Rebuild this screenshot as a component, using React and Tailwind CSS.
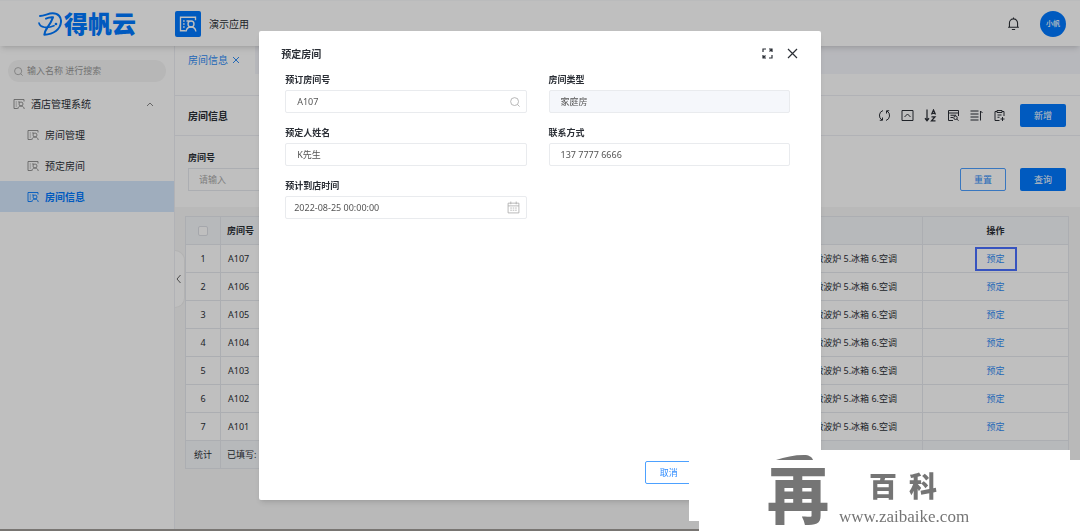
import { useState } from "react";

const MENU = ["房间管理", "预定房间", "房间信息"];
const ROOMS = ["A107", "A106", "A105", "A104", "A103", "A102", "A101"];

const RecordIcon = ({ className }) => (
  <svg
    className={className}
    viewBox="0 0 24 24"
    fill="none"
    stroke="currentColor"
    strokeWidth="1.8"
    aria-hidden="true"
  >
    <path d="M9 21H2V3h20v4" />
    <path d="M5.500 8h2M10 8h4M5.500 12h2M5.500 16h2" />
    <circle cx="16" cy="12" r="4" />
    <path d="M9.500 22c.4-3.500 2.600-6 6.500-6s6 2.500 6.500 6" />
  </svg>
);

const LogoMark = () => (
  <svg
    className="w-6 h-6"
    viewBox="0 0 72 72"
    fill="none"
    stroke="currentColor"
    strokeLinecap="round"
    strokeLinejoin="round"
    aria-hidden="true"
  >
    <path
      strokeWidth="6"
      d="M6 12C20 12 30 4 44 4c17 0 26 11 25 26-2 22-22 37-50 38 1-8 3-12 7-18"
    />
    <path strokeWidth="6" d="M24 20c8-4 14-5 21-4C40 30 32 42 26 50" />
    <path strokeWidth="5" d="M3 33c3 15 26 16 45 8" />
    <circle cx="54" cy="36" r="4" fill="currentColor" stroke="none" />
  </svg>
);

const SearchIcon = ({ className }) => (
  <svg
    className={className}
    viewBox="0 0 24 24"
    fill="none"
    stroke="currentColor"
    strokeWidth="2"
    aria-hidden="true"
  >
    <circle cx="11" cy="11" r="9.500" />
    <path d="m18 18 5 5" />
  </svg>
);

const BellIcon = () => (
  <svg
    className="w-[13px] h-[13px]"
    viewBox="0 0 24 24"
    fill="none"
    stroke="currentColor"
    strokeWidth="2"
    aria-hidden="true"
  >
    <path d="M2 19h20M4.500 19v-8a7.500 7.500 0 0 1 15 0v8M12 3.500V1M9 23h6" />
  </svg>
);

const CalendarIcon = () => (
  <svg
    className="w-[13px] h-[13px]"
    viewBox="0 0 24 24"
    fill="none"
    stroke="currentColor"
    strokeWidth="1.500"
    aria-hidden="true"
  >
    <path d="M2 4h20v18H2zM2 9h20M7 1v5M17 1v5" />
    <path d="M6 13h3M10.500 13h3M15 13h3M6 17h3M10.500 17h3M15 17h3" />
  </svg>
);

const TOOLS = [
  {
    label: "刷新",
    icon: (
      <>
        <path d="M9 2a10.500 10.500 0 0 0-2 19M15 22a10.500 10.500 0 0 0 2-19" />
        <path d="M2.500 21.500H8V16M21.500 2.500H16V8" />
      </>
    ),
  },
  {
    label: "收起",
    icon: (
      <>
        <path d="M1 2h22v20H1z" />
        <path d="m6 15 6-6 6 6" />
      </>
    ),
  },
  {
    label: "排序",
    icon: (
      <>
        <path strokeWidth="2.500" d="M5 0v22M1 17.500l4 5 4-5" />
        <path
          strokeWidth="2.500"
          d="m14 10 4-9 4 9M15 7.500h6M14 14.500h7l-7 8h8"
        />
      </>
    ),
  },
  {
    label: "筛选",
    icon: (
      <>
        <path d="M11 22H2V2h20v11" />
        <path d="M2 7h20M6 11.500h11M6 16h5" />
        <circle cx="16" cy="16.500" r="3.500" />
        <path d="m18.500 19 3.500 3.500" />
      </>
    ),
  },
  {
    label: "行高",
    icon: <path d="M0 3h16M0 9h16M0 15h16M0 21h16M20 22V3l4 4" />,
  },
  {
    label: "导入",
    icon: (
      <>
        <path d="M12 22H3V4h4M17 4h4v9M7 2h10v4H7z" />
        <path d="M8 11h8M8 15.500h4M18 15v8M14 19h8" />
      </>
    ),
  },
];

const Header = () => (
  <header className="relative z-10 flex items-center h-[46px] shrink-0 pr-3.5 bg-white border-t border-gray-50 shadow-md">
    <div className="w-[175px] pl-[38px] flex items-center gap-0.5 text-[#0079ff] shrink-0">
      <LogoMark />
      <span className="text-[24px] leading-6 font-black whitespace-nowrap">
        得帆云
      </span>
    </div>
    <div className="flex items-center gap-2">
      <div className="w-[26px] h-[26px] rounded-xs bg-[#0079ff] text-white flex items-center justify-center">
        <RecordIcon className="w-[18px] h-[18px]" />
      </div>
      <span className="text-[10px]">演示应用</span>
    </div>
    <div className="ml-auto flex items-center gap-5">
      <button type="button" aria-label="通知">
        <BellIcon />
      </button>
      <div className="w-[26px] h-[26px] rounded-full bg-[#0079ff] text-white text-[7px] font-medium flex items-center justify-center">
        小帆
      </div>
    </div>
  </header>
);

const Sidebar = ({ active, onSelect }) => (
  <aside className="w-[174px] shrink-0 bg-white pt-3.5">
    <label className="mx-2 h-[22px] px-1.5 rounded-full bg-[#f5f5f5] flex items-center gap-1 text-[#999]">
      <SearchIcon className="w-[9px] h-[9px] shrink-0" />
      <input
        type="text"
        aria-label="搜索"
        placeholder="输入名称 进行搜索"
        className="w-full bg-transparent outline-none placeholder:text-[#999]"
      />
    </label>
    <nav className="mt-1.5 text-[10px]">
      <button
        type="button"
        className="w-full h-[31px] pl-[13px] pr-5 flex items-center gap-1.5"
      >
        <RecordIcon className="w-3 h-3 text-[#888]" />
        酒店管理系统
        <svg
          className="ml-auto w-2 h-2 text-[#888]"
          viewBox="0 0 8 8"
          fill="none"
          stroke="currentColor"
          aria-hidden="true"
        >
          <path d="m1 6 3-3 3 3" />
        </svg>
      </button>
      {MENU.map((item) => (
        <a
          key={item}
          href="#"
          onClick={() => onSelect(item)}
          className={`h-[31px] pl-[27px] flex items-center gap-1.5 ${
            item === active ? "bg-[#d5e7fc] text-[#0079ff] font-bold" : ""
          }`}
        >
          <RecordIcon
            className={`w-3 h-3 ${item === active ? "" : "text-[#888]"}`}
          />
          {item}
        </a>
      ))}
    </nav>
  </aside>
);

const RoomTable = () => (
  <table className="w-full table-fixed border-collapse bg-white text-center">
    <thead>
      <tr className="h-7 bg-[#f5f7fa]">
        <th scope="col" className="w-[35px] border border-[#e6e9ee]">
          <input
            type="checkbox"
            aria-label="全选"
            className="block mx-auto w-2.5 h-2.5 appearance-none border border-[#dcdfe6] rounded-xs bg-white"
          />
        </th>
        <th
          scope="col"
          className="w-[90px] pl-1.5 border border-[#e6e9ee] text-left"
        >
          房间号
        </th>
        <td className="border border-[#e6e9ee]"></td>
        <th scope="col" className="w-[146px] border border-[#e6e9ee]">
          操作
        </th>
      </tr>
    </thead>
    <tbody>
      {ROOMS.map((room, index) => (
        <tr key={room} className="h-7">
          <td className="border border-[#e6e9ee]">{index + 1}</td>
          <td className="pl-[7px] border border-[#e6e9ee] text-left">{room}</td>
          <td className="pr-[25px] border border-[#e6e9ee] text-right">
            微波炉 5.冰箱 6.空调
          </td>
          <td className="border border-[#e6e9ee]">
            <button
              type="button"
              className={`block mx-auto w-[42px] h-6 text-[#2f8cf5] ${
                index === 0 ? "border-2 border-[#4a6fff]" : ""
              }`}
            >
              预定
            </button>
          </td>
        </tr>
      ))}
    </tbody>
    <tfoot>
      <tr className="h-7 bg-[#f5f7fa]">
        <td className="border border-[#e6e9ee]">统计</td>
        <td className="pl-1.5 border border-[#e6e9ee] text-left">已填写:</td>
        <td className="border border-[#e6e9ee]"></td>
        <td className="border border-[#e6e9ee]"></td>
      </tr>
    </tfoot>
  </table>
);

const RoomPage = () => (
  <main className="relative flex-1 min-w-0 border-l border-[#eceef3] bg-[#f7f7f7]">
    <div className="flex h-7 bg-[#f5f6fb]">
      <div className="w-20 pl-[13px] bg-white flex items-center gap-1 text-[#2f8cf5] text-[10px]">
        房间信息
        <button type="button" aria-label="关闭标签">
          <svg
            className="w-2 h-2"
            viewBox="0 0 8 8"
            stroke="currentColor"
            aria-hidden="true"
          >
            <path d="m1 1 6 6M7 1 1 7" />
          </svg>
        </button>
      </div>
    </div>
    <div className="h-[22px] bg-white border-b border-[#eceef3]" />
    <div className="h-10 pl-[13px] pr-3.5 bg-white border-b border-[#eceef3] flex items-center">
      <h1 className="text-[10px] font-bold">房间信息</h1>
      <div className="ml-auto mr-3.5 flex items-center gap-2.5">
        {TOOLS.map(({ label, icon }) => (
          <button key={label} type="button" aria-label={label}>
            <svg
              className="w-[13px] h-[13px]"
              viewBox="-1 -1 26 26"
              fill="none"
              stroke="currentColor"
              strokeWidth="2"
              aria-hidden="true"
            >
              {icon}
            </svg>
          </button>
        ))}
      </div>
      <button
        type="button"
        className="w-[46px] h-[23px] rounded-xs bg-[#0079ff] text-white"
      >
        新增
      </button>
    </div>
    <div className="h-[71px] pl-[13px] pr-3.5 pb-4 bg-white flex items-end justify-between">
      <div className="w-60">
        <label htmlFor="room-filter" className="block h-5 leading-5 font-bold">
          房间号
        </label>
        <input
          id="room-filter"
          type="text"
          placeholder="请输入"
          className="block w-full h-[23px] px-2.5 border border-[#e6e9ee] outline-none placeholder:text-[#aaa]"
        />
      </div>
      <div className="flex gap-3.5">
        <button
          type="button"
          className="w-[46px] h-[23px] rounded-xs border border-[#4d9fff] text-[#2f8cf5]"
        >
          重置
        </button>
        <button
          type="button"
          className="w-[46px] h-[23px] rounded-xs bg-[#0079ff] text-white"
        >
          查询
        </button>
      </div>
    </div>
    <div className="pl-2.5 pr-[11px] pt-[9px]">
      <RoomTable />
    </div>
    <button
      type="button"
      aria-label="收起菜单"
      className="absolute left-0 top-[204px] w-2.5 h-[58px] rounded-r-full bg-white border border-l-0 border-[#eee] text-[#666]"
    >
      <svg
        className="w-2 h-2"
        viewBox="0 0 8 8"
        fill="none"
        stroke="currentColor"
        aria-hidden="true"
      >
        <path d="M5.500 0 2 4l3.500 4" />
      </svg>
    </button>
  </main>
);

const Field = ({ id, label, value, readOnly, icon, padding = "px-[11px]" }) => (
  <div>
    <label htmlFor={id} className="block h-5 leading-5 font-bold">
      {label}
    </label>
    <div className="relative">
      <input
        id={id}
        type="text"
        defaultValue={value}
        readOnly={readOnly}
        className={`block w-full h-[23px] ${padding} border border-[#e9ebee] rounded-xs outline-none text-[#555] ${
          readOnly ? "bg-[#f5f7fb]" : "bg-white"
        }`}
      />
      {icon && (
        <span className="absolute inset-y-0 right-[7px] flex items-center text-[#aaa]">
          {icon}
        </span>
      )}
    </div>
  </div>
);

const BookingModal = ({ onClose }) => (
  <div className="fixed inset-0 z-20 py-[31px] flex justify-center bg-black/25">
    <div
      role="dialog"
      aria-labelledby="booking-title"
      className="w-[52%] bg-white rounded-xs shadow-md flex flex-col"
    >
      <div className="h-[39px] pt-1.5 pl-[22px] pr-[23px] flex items-center">
        <h2 id="booking-title" className="text-[10px] font-bold">
          预定房间
        </h2>
        <div className="ml-auto flex items-center gap-3.5">
          <button type="button" aria-label="全屏">
            <svg
              className="w-[11px] h-[11px]"
              viewBox="0 0 11 11"
              fill="none"
              stroke="currentColor"
              strokeWidth="1.2"
              aria-hidden="true"
            >
              <path d="M1 4V1h3M7 1h3v3M10 7v3H7M4 10H1V7M10 1 7.500 3.500M1 10l2.500-2.500" />
            </svg>
          </button>
          <button type="button" aria-label="关闭" onClick={onClose}>
            <svg
              className="w-[11px] h-[11px]"
              viewBox="0 0 11 11"
              stroke="currentColor"
              strokeWidth="1.2"
              aria-hidden="true"
            >
              <path d="m1 1 9 9M10 1l-9 9" />
            </svg>
          </button>
        </div>
      </div>
      <form className="pl-[26px] pr-[31px] grid grid-cols-2 gap-x-[22px] gap-y-2.5">
        <Field
          id="room"
          label="预订房间号"
          value="A107"
          icon={<SearchIcon className="w-2.5 h-2.5" />}
        />
        <Field id="type" label="房间类型" value="家庭房" readOnly />
        <Field id="guest" label="预定人姓名" value="K先生" />
        <Field id="phone" label="联系方式" value="137 7777 6666" />
        <Field
          id="arrival"
          label="预计到店时间"
          value="2022-08-25 00:00:00"
          padding="px-2"
          icon={<CalendarIcon />}
        />
      </form>
      <div className="mt-auto pb-4 pr-32 flex justify-end">
        <button
          type="button"
          onClick={onClose}
          className="w-12 h-[23px] rounded-xs border border-[#4da1ff] text-[#2f8cff]"
        >
          取消
        </button>
      </div>
    </div>
  </div>
);

const Watermark = () => (
  <div className="fixed right-0 bottom-0 z-30 w-[391px] text-[#757575]">
    <div className="ml-[71px] mr-2.5 h-2.5 bg-white">
      <svg className="ml-4 w-10 h-2.5" viewBox="0 0 40 10" aria-hidden="true">
        <path fill="currentColor" d="M0 10C9 7 18 5 28 5c5 0 8 2 9 5z" />
      </svg>
    </div>
    <div className="h-[61px] pl-[78px] bg-white flex items-start gap-10">
      <span className="pt-1 text-[62px] leading-[62px] font-black">再</span>
      <div className="pt-3">
        <div className="flex gap-3 text-[28px] leading-7 font-black">
          <span>百</span>
          <span>科</span>
        </div>
      </div>
    </div>
    <div className="ml-2.5 h-2.5 bg-white" />
    <div className="absolute left-[150px] bottom-1 font-['Liberation_Serif',serif] text-[17px] leading-5">
      www.zaibaike.com
    </div>
  </div>
);

export default function App() {
  const [active, setActive] = useState("房间信息");
  const [showModal, setShowModal] = useState(true);

  return (
    <div className="min-h-screen flex flex-col bg-[#f7f7f7] text-[#2b2f36] text-[9px] leading-4 font-['Noto_Sans','Noto_Sans_CJK_SC',sans-serif] border-b-2 border-[#a09c98]">
      <Header />
      <div className="flex flex-1">
        <Sidebar active={active} onSelect={setActive} />
        <RoomPage />
      </div>
      {showModal && <BookingModal onClose={() => setShowModal(false)} />}
      <Watermark />
    </div>
  );
}
